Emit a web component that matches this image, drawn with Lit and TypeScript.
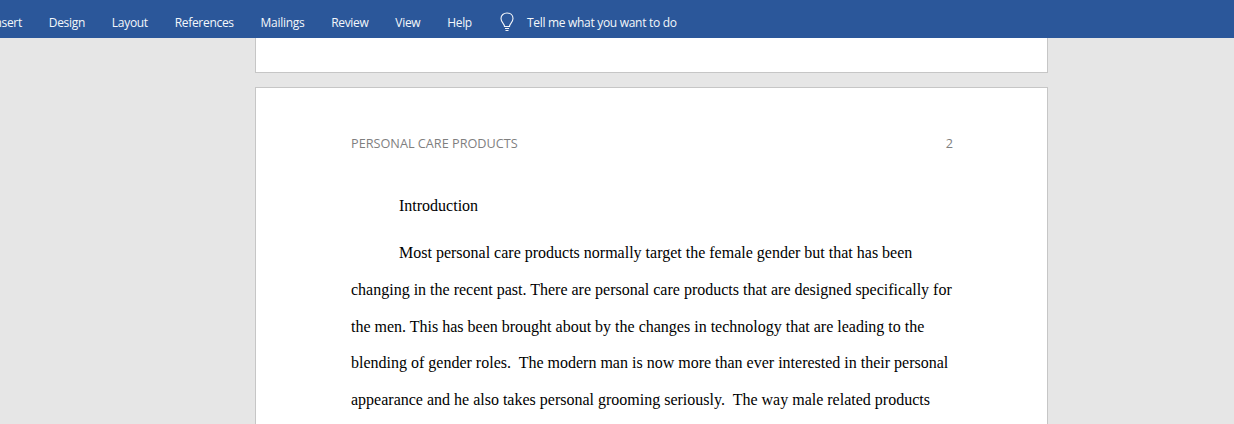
import { LitElement, html, css } from "lit";
import { customElement } from "lit/decorators.js";

const tabs = ["Insert", "Design", "Layout", "References", "Mailings", "Review", "View", "Help"];
const lines = [
  "Most personal care products normally target the female gender but that has been",
  "changing in the recent past. There are personal care products that are designed specifically for",
  "the men. This has been brought about by the changes in technology that are leading to the",
  "blending of gender roles.  The modern man is now more than ever interested in their personal",
  "appearance and he also takes personal grooming seriously.  The way male related products",
];

@customElement("app-root")
export class AppRoot extends LitElement {
  static styles = css`
    :host { display: block; width: 1234px; height: 424px; overflow: hidden; background: #e6e6e6; }
    .ribbon {
      height: 38px; background: #2b579a; color: #f4f7fb; display: flex; align-items: center;
      font: 12px/16px "Open Sans", sans-serif; letter-spacing: -0.3px; padding-top: 7px; box-sizing: border-box;
      overflow: hidden;
    }
    .tabs { display: flex; gap: 26.8px; margin-left: -8.6px; }
    .bulb { margin-left: 28.5px; width: 14px; height: 20px; display: block; margin-top: -2px; }
    .tell { margin-left: 12.5px; }
    .doc { display: flex; flex-direction: column; gap: 14px; width: 793px; margin-left: 255px; }
    .page { background: #fff; border: 1px solid #c6c6c6; box-sizing: border-box; }
    .prev { height: 35px; border-top: 0; }
    .cur { height: 400px; padding: 46px 94px 0 95px; }
    .head { display: flex; justify-content: space-between; color: #7f7f7f; font: 12.7px/18px "Open Sans", sans-serif; }
    .body { font: 16px/36.7px "Liberation Serif", serif; color: #000; margin-top: 35.5px; }
    .line { white-space: pre; }
    .in { padding-left: 48px; }
    .intro { margin-bottom: 11px; }
  `;
  render() {
    return html`
      <div class="ribbon">
        <div class="tabs">${tabs.map((t) => html`<span>${t}</span>`)}</div>
        <svg class="bulb" viewBox="0 0 14 20" fill="none" stroke="#f4f7fb" stroke-width="1.1">
          <path d="M4.5 14.5C4.5 11.5 1 10.5 1 6.6C1 3.2 3.7 1 7 1s6 2.2 6 5.6c0 3.9-3.500 4.900-3.500 7.900z" />
          <path d="M5 16.500h4M5.500 18.500h3" />
        </svg>
        <span class="tell">Tell me what you want to do</span>
      </div>
      <div class="doc">
        <div class="page prev"></div>
        <div class="page cur">
          <div class="head"><span>PERSONAL CARE PRODUCTS</span><span>2</span></div>
          <div class="body">
            <div class="line in intro">Introduction</div>
            <div class="line in">${lines[0]}</div>
            ${lines.slice(1).map((l) => html`<div class="line">${l}</div>`)}
          </div>
        </div>
      </div>
    `;
  }
}
